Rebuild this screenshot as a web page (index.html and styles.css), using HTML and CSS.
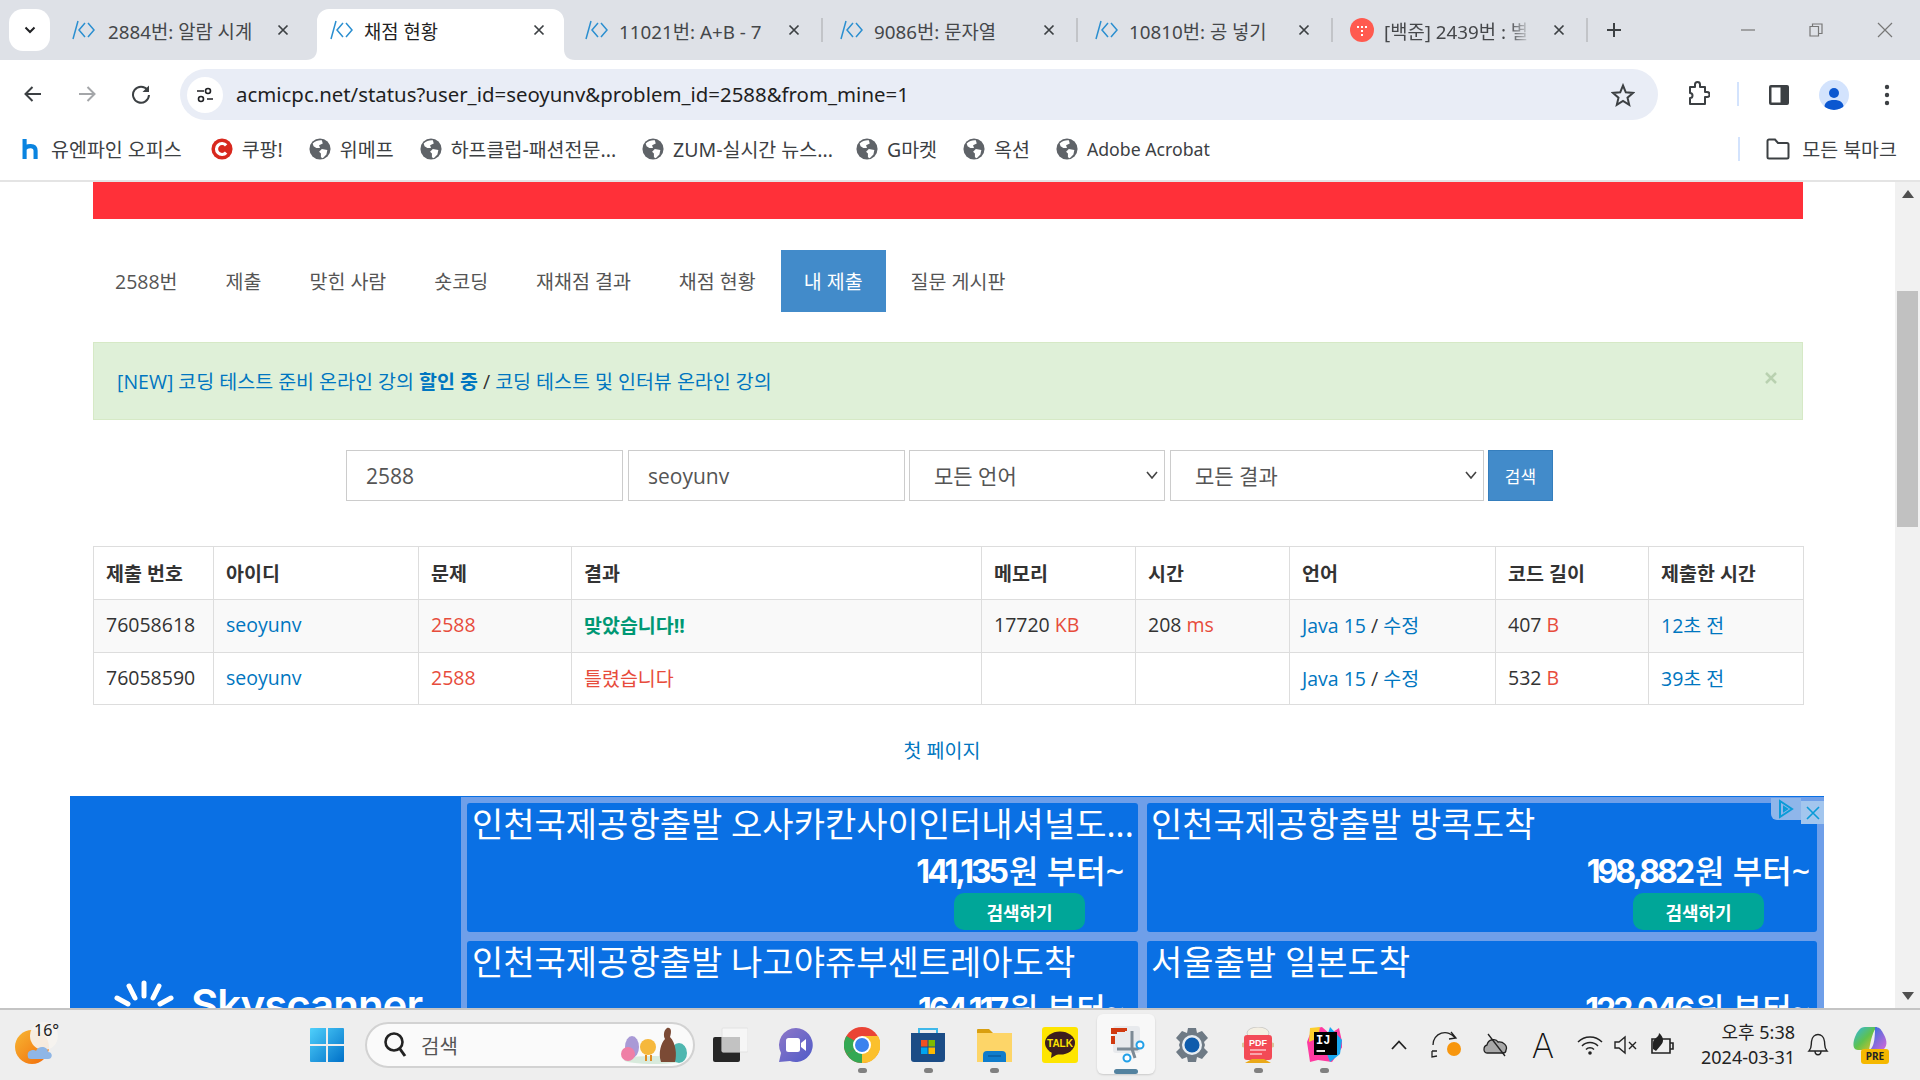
FILE: index.html
```html
<!DOCTYPE html>
<html lang="ko">
<head>
    <meta charset="UTF-8">
    <title>채점 현황</title>
    <link rel="stylesheet" href="styles.css">
</head>
<body>
    <svg class="defs" width="0" height="0">
        <symbol id="boj" viewBox="0 0 24 24">
            <path d="M6 3 L1 21 M13 5 L7 12 L13 19 M16 5 L22 12 L16 19" fill="none" stroke="#2b8fd0" stroke-width="1.5"/>
        </symbol>
        <symbol id="tabx" viewBox="0 0 12 12">
            <path d="M1.5 1.5 L10.5 10.5 M10.5 1.5 L1.5 10.5" fill="none" stroke="#3c4043" stroke-width="1.7"/>
        </symbol>
        <symbol id="globe" viewBox="0 0 24 24">
            <circle cx="12" cy="12" r="11.5" fill="#5f6368"/>
            <path d="M4 6 C7 3 11 2 14 2.500 L15 6 L11 8 L12 11 L8 11 L5 9 Z M14 12 L20 13 L19 18 L15 22 L13 21 L13 17 L11 15 Z" fill="#fff"/>
        </symbol>
    </svg>

    <div class="tabstrip">
        <div class="tab-menu">
            <svg width="12" height="8" viewBox="0 0 12 8"><path d="M1.500 1.500 L6 6 L10.500 1.500" fill="none" stroke="#202124" stroke-width="2"/></svg>
        </div>
        <div class="tab first">
            <svg class="favicon"><use href="#boj"/></svg>
            <span class="tab-title">2884번: 알람 시계</span>
            <svg class="tab-close"><use href="#tabx"/></svg>
        </div>
        <div class="tab active">
            <svg class="tab-shape" width="269" height="51" viewBox="0 0 269 51"><path d="M0 51 C7 51 11 47 11 40 V12 A12 12 0 0 1 23 0 H246 A12 12 0 0 1 258 12 V40 C258 47 262 51 269 51 Z" fill="#fff"/></svg>
            <svg class="favicon"><use href="#boj"/></svg>
            <span class="tab-title">채점 현황</span>
            <svg class="tab-close"><use href="#tabx"/></svg>
        </div>
        <div class="tab sep">
            <svg class="favicon"><use href="#boj"/></svg>
            <span class="tab-title">11021번: A+B - 7</span>
            <svg class="tab-close"><use href="#tabx"/></svg>
        </div>
        <div class="tab sep">
            <svg class="favicon"><use href="#boj"/></svg>
            <span class="tab-title">9086번: 문자열</span>
            <svg class="tab-close"><use href="#tabx"/></svg>
        </div>
        <div class="tab sep">
            <svg class="favicon"><use href="#boj"/></svg>
            <span class="tab-title">10810번: 공 넣기</span>
            <svg class="tab-close"><use href="#tabx"/></svg>
        </div>
        <div class="tab sep">
            <svg class="favicon" viewBox="0 0 24 24"><circle cx="12" cy="12" r="12" fill="#ff5a4f"/><path d="M7 8h2v2H7z M11 8h2v2h-2z M15 8h2v2h-2z M11 12h2v2h-2z M11 16h2v2h-2z" fill="#fff"/></svg>
            <span class="tab-title fade">[백준] 2439번 : 별</span>
            <svg class="tab-close"><use href="#tabx"/></svg>
        </div>
        <svg class="tab-new" width="16" height="16" viewBox="0 0 16 16"><path d="M8 1 V15 M1 8 H15" stroke="#3c4043" stroke-width="2"/></svg>
        <div class="win-controls">
            <svg width="14" height="14" viewBox="0 0 14 14"><path d="M0 7 H14" stroke="#777" stroke-width="1.200"/></svg>
            <svg width="14" height="14" viewBox="0 0 14 14"><path d="M1 3.500 H9.500 V13 H1 Z M3.500 3.500 V1 H13 V10.500 H9.500" fill="none" stroke="#777" stroke-width="1.200"/></svg>
            <svg width="16" height="16" viewBox="0 0 16 16"><path d="M1 1 L15 15 M15 1 L1 15" stroke="#777" stroke-width="1.200"/></svg>
        </div>
    </div>

    <div class="toolbar">
        <svg class="tool back" width="20" height="20" viewBox="0 0 20 20"><path d="M18 10 H3 M9.500 3 L2.500 10 L9.500 17" fill="none" stroke="#3c4043" stroke-width="2"/></svg>
        <svg class="tool forward" width="20" height="20" viewBox="0 0 20 20"><path d="M2 10 H17 M10.500 3 L17.500 10 L10.500 17" fill="none" stroke="#a4a6a9" stroke-width="2"/></svg>
        <svg class="tool reload" width="20" height="20" viewBox="0 0 20 20"><path d="M16.500 6 A8 8 0 1 0 18 11" fill="none" stroke="#3c4043" stroke-width="2"/><path d="M18 1.500 V8 H11.500 Z" fill="#3c4043"/></svg>
        <div class="omnibox">
            <div class="site-btn">
                <svg width="18" height="18" viewBox="0 0 18 18"><g fill="none" stroke="#202124" stroke-width="1.600"><path d="M1 5 H8 M11 13 H17"/><circle cx="12" cy="5" r="2.500"/><circle cx="5" cy="13" r="2.500"/></g></svg>
            </div>
            <span class="url">acmicpc.net/status?user_id=seoyunv&amp;problem_id=2588&amp;from_mine=1</span>
            <svg class="star" width="24" height="24" viewBox="0 0 24 24"><path d="M12 2.500 L14.800 9.300 L22 9.900 L16.500 14.700 L18.200 21.800 L12 18 L5.800 21.800 L7.500 14.700 L2 9.900 L9.200 9.300 Z" fill="none" stroke="#3c4043" stroke-width="2"/></svg>
        </div>
        <svg class="tool ext" width="24" height="26" viewBox="0 0 24 26"><path d="M4 6 H9 V3.500 A2.500 2.500 0 0 1 14 3.500 V6 H19 V11 H21 A2.500 2.500 0 0 1 21 16 H19 V23 H4 V17 A2.500 2.500 0 0 0 4 12 Z" fill="none" stroke="#3c4043" stroke-width="2" stroke-linejoin="round"/></svg>
        <span class="tool-sep"></span>
        <svg class="tool panel" width="22" height="22" viewBox="0 0 22 22"><rect x="1" y="1" width="20" height="20" rx="2" fill="#3c4043"/><rect x="3.500" y="3.500" width="9" height="15" fill="#fff"/></svg>
        <div class="avatar">
            <svg width="20" height="24" viewBox="0 0 20 24"><circle cx="10" cy="7" r="5" fill="#0b57d0"/><path d="M0 24 C0 16 4 14 10 14 C16 14 20 16 20 24 Z" fill="#0b57d0"/></svg>
        </div>
        <svg class="tool menu" width="6" height="24" viewBox="0 0 6 24"><circle cx="3" cy="4" r="2.200" fill="#3c4043"/><circle cx="3" cy="12" r="2.200" fill="#3c4043"/><circle cx="3" cy="20" r="2.200" fill="#3c4043"/></svg>
    </div>

    <div class="bookmarks">
        <div class="bm office"><svg class="bm-icon" viewBox="0 0 20 24"><path d="M3 1 V23 M3 12 C5 8 15 7 15 14 V23" fill="none" stroke="#0a84e0" stroke-width="4.500"/></svg><span>유엔파인 오피스</span></div>
        <div class="bm"><svg class="bm-icon" viewBox="0 0 24 24"><circle cx="12" cy="12" r="11.500" fill="#d8281e"/><path d="M16.500 8 A6 6 0 1 0 16.500 16" fill="none" stroke="#fff" stroke-width="3.500"/></svg><span>쿠팡!</span></div>
        <div class="bm"><svg class="bm-icon"><use href="#globe"/></svg><span>위메프</span></div>
        <div class="bm"><svg class="bm-icon"><use href="#globe"/></svg><span>하프클럽-패션전문...</span></div>
        <div class="bm zum"><svg class="bm-icon"><use href="#globe"/></svg><span>ZUM-실시간 뉴스...</span></div>
        <div class="bm"><svg class="bm-icon"><use href="#globe"/></svg><span>G마켓</span></div>
        <div class="bm"><svg class="bm-icon"><use href="#globe"/></svg><span>옥션</span></div>
        <div class="bm"><svg class="bm-icon"><use href="#globe"/></svg><span class="latin">Adobe Acrobat</span></div>
        <span class="bm-sep"></span>
        <div class="bm all"><svg width="24" height="22" viewBox="0 0 24 22"><path d="M1.500 3 A1.500 1.500 0 0 1 3 1.500 H9 L12 5 H21 A1.500 1.500 0 0 1 22.500 6.500 V19 A1.500 1.500 0 0 1 21 20.500 H3 A1.500 1.500 0 0 1 1.500 19 Z" fill="none" stroke="#3c4043" stroke-width="2"/></svg><span>모든 북마크</span></div>
    </div>

    <div class="viewport">
        <div class="page">
            <div class="container">
                <div class="red-bar"></div>
                <ul class="nav">
                    <li>2588번</li>
                    <li>제출</li>
                    <li>맞힌 사람</li>
                    <li>숏코딩</li>
                    <li>재채점 결과</li>
                    <li>채점 현황</li>
                    <li class="on">내 제출</li>
                    <li>질문 게시판</li>
                </ul>
                <div class="alert">
                    <p><a>[NEW] 코딩 테스트 준비 온라인 강의 <b>할인 중</b></a> / <a>코딩 테스트 및 인터뷰 온라인 강의</a></p>
                    <svg class="alert-close" width="12" height="12" viewBox="0 0 12 12"><path d="M1 1 L11 11 M11 1 L1 11" stroke="#b9d1b0" stroke-width="2.500"/></svg>
                </div>
                <form class="search">
                    <input class="field w-id" type="text" value="2588">
                    <input class="field w-id gap-s" type="text" value="seoyunv">
                    <div class="select w-lang">
                        <span>모든 언어</span>
                        <svg width="12" height="8" viewBox="0 0 12 8"><path d="M1 1 L6 7 L11 1" fill="none" stroke="#444" stroke-width="1.600"/></svg>
                    </div>
                    <div class="select w-res">
                        <span>모든 결과</span>
                        <svg width="12" height="8" viewBox="0 0 12 8"><path d="M1 1 L6 7 L11 1" fill="none" stroke="#444" stroke-width="1.600"/></svg>
                    </div>
                    <button class="search-btn" type="button">검색</button>
                </form>
                <table class="status">
                    <colgroup>
                        <col class="c1"><col class="c2"><col class="c3"><col class="c4"><col class="c5">
                        <col class="c6"><col class="c7"><col class="c8"><col class="c9">
                    </colgroup>
                    <thead>
                        <tr><th>제출 번호</th><th>아이디</th><th>문제</th><th>결과</th><th>메모리</th><th>시간</th><th>언어</th><th>코드 길이</th><th>제출한 시간</th></tr>
                    </thead>
                    <tbody>
                        <tr class="odd">
                            <td>76058618</td><td><a>seoyunv</a></td><td><a class="red">2588</a></td>
                            <td><b class="ac">맞았습니다!!</b></td>
                            <td>17720 <span class="red">KB</span></td><td>208 <span class="red">ms</span></td>
                            <td><a>Java 15</a> / <a>수정</a></td><td>407 <span class="red">B</span></td><td><a>12초 전</a></td>
                        </tr>
                        <tr>
                            <td>76058590</td><td><a>seoyunv</a></td><td><a class="red">2588</a></td>
                            <td><span class="red">틀렸습니다</span></td>
                            <td></td><td></td>
                            <td><a>Java 15</a> / <a>수정</a></td><td>532 <span class="red">B</span></td><td><a>39초 전</a></td>
                        </tr>
                    </tbody>
                </table>
                <div class="pager"><a>첫 페이지</a></div>
            </div>

            <div class="ad">
                <div class="ad-brand">
                    <svg width="64" height="44" viewBox="0 0 64 44"><g fill="none" stroke="#fff" stroke-width="5" stroke-linecap="round"><path d="M32 3 V16 M17 6 L23 18 M47 6 L41 18 M5 18 L16 24 M59 18 L48 24"/></g></svg>
                    <span>Skyscanner</span>
                </div>
                <div class="ad-grid">
                    <div class="ad-card">
                        <div class="ad-title">인천국제공항출발 오사카칸사이인터내셔널도...</div>
                        <div class="ad-price"><b>141,135</b>원 부터~</div>
                        <div class="ad-foot"><span class="ad-btn">검색하기</span></div>
                    </div>
                    <div class="ad-card right">
                        <div class="ad-title">인천국제공항출발 방콕도착</div>
                        <div class="ad-price"><b>198,882</b>원 부터~</div>
                        <div class="ad-foot"><span class="ad-btn">검색하기</span></div>
                    </div>
                    <div class="ad-card">
                        <div class="ad-title">인천국제공항출발 나고야쥬부센트레아도착</div>
                        <div class="ad-price"><b>164,117</b>원 부터~</div>
                    </div>
                    <div class="ad-card right">
                        <div class="ad-title">서울출발 일본도착</div>
                        <div class="ad-price"><b>122,046</b>원 부터~</div>
                    </div>
                </div>
                <div class="ad-choice">
                    <svg width="18" height="20" viewBox="0 0 18 20"><path d="M3 2 L15 10 L3 18 Z M7 8 L10 10 L7 12 Z" fill="none" stroke="#0a9bd8" stroke-width="2"/></svg>
                </div>
                <div class="ad-x">
                    <svg width="14" height="14" viewBox="0 0 14 14"><path d="M1 1 L13 13 M13 1 L1 13" stroke="#0a9bd8" stroke-width="1.600"/></svg>
                </div>
            </div>
        </div>
        <div class="scrollbar">
            <svg class="sb-up" width="12" height="8" viewBox="0 0 12 8"><path d="M0 8 L6 0 L12 8 Z" fill="#505050"/></svg>
            <div class="sb-thumb"></div>
            <svg class="sb-down" width="12" height="8" viewBox="0 0 12 8"><path d="M0 0 L6 8 L12 0 Z" fill="#505050"/></svg>
        </div>
    </div>

    <div class="taskbar">
        <div class="weather">
            <svg width="52" height="48" viewBox="0 0 52 48">
                <defs><linearGradient id="sun" x1="0" y1="0" x2="1" y2="1"><stop offset="0" stop-color="#f7b733"/><stop offset="1" stop-color="#f26a0a"/></linearGradient></defs>
                <circle cx="18" cy="26" r="17" fill="url(#sun)"/>
                <circle cx="30" cy="15" r="14" fill="#f6f3ef" opacity=".92"/>
                <path d="M14 36 C12 29 20 28 22 30 C24 24 34 25 34 31 C39 31 39 38 34 38 H17 C15 38 14 37 14 36 Z" fill="#8fb6e6"/>
            </svg>
            <span>16°</span>
        </div>
        <svg class="winlogo" width="36" height="36" viewBox="0 0 36 36">
            <defs><linearGradient id="wl" x1="0" y1="0" x2="1" y2="1"><stop offset="0" stop-color="#4fd0fb"/><stop offset="1" stop-color="#0070c8"/></linearGradient></defs>
            <path d="M1 2 A1 1 0 0 1 2 1 H17 V17 H1 Z M19 1 H34 A1 1 0 0 1 35 2 V17 H19 Z M1 19 H17 V35 H2 A1 1 0 0 1 1 34 Z M19 19 H35 V34 A1 1 0 0 1 34 35 H19 Z" fill="url(#wl)"/>
        </svg>
        <div class="task-search">
            <svg width="26" height="28" viewBox="0 0 26 28"><circle cx="11" cy="11" r="8.500" fill="none" stroke="#222" stroke-width="2.600"/><path d="M17 18 L22 25" stroke="#222" stroke-width="3"/></svg>
            <span>검색</span>
            <svg class="easter" width="68" height="40" viewBox="0 0 68 40">
                <ellipse cx="33" cy="35" rx="30" ry="4" fill="#d8eadc"/>
                <ellipse cx="11" cy="22" rx="7" ry="11" fill="#a99ad6"/>
                <ellipse cx="7" cy="29" rx="7" ry="7" fill="#ef7fa6"/>
                <ellipse cx="58" cy="28" rx="8" ry="10" fill="#4fb7b0"/>
                <circle cx="27" cy="22" r="8" fill="#f6b83c"/><path d="M25 30 V36 M30 30 V36" stroke="#e08b20" stroke-width="2"/>
                <path d="M46 3 C50 2 51 6 49 12 C55 18 56 30 54 37 H40 C37 28 40 18 44 14 C42 10 43 5 46 3 Z" fill="#7b4a35"/>
            </svg>
        </div>
        <div class="apps">
            <div class="app">
                <svg width="36" height="36" viewBox="0 0 36 36"><rect x="1" y="10" width="27" height="25" rx="2" fill="#262626"/><rect x="10" y="1" width="26" height="24" rx="1" fill="#f6f6f6" stroke="#e2e2e2"/><rect x="10" y="10" width="18" height="15" fill="#c2c2c2"/></svg>
            </div>
            <div class="app">
                <svg width="36" height="36" viewBox="0 0 36 36"><defs><linearGradient id="meet" x1="0" y1="0" x2="1" y2="1"><stop offset="0" stop-color="#8f78c8"/><stop offset="1" stop-color="#4f5bc8"/></linearGradient></defs><path d="M18 1 A17 17 0 1 1 12 34 L1 35 L3 26 A17 17 0 0 1 18 1 Z" fill="url(#meet)"/><rect x="8" y="11" width="14" height="14" rx="2.500" fill="#fff"/><path d="M23 16 L28 12 V24 L23 20 Z" fill="#fff"/></svg>
            </div>
            <div class="app dot">
                <svg width="36" height="36" viewBox="0 0 36 36"><circle cx="18" cy="18" r="18" fill="#ea4335"/><path d="M18 18 L2.400 27 A18 18 0 0 0 18 36 L27 20 Z" fill="#34a853"/><path d="M18 18 V36 A18 18 0 0 0 34 9 H18 Z" fill="#fbc02d"/><path d="M18 18 L2.400 27 A18 18 0 0 1 2.400 9 Z" fill="#34a853"/><circle cx="18" cy="18" r="9" fill="#fff"/><circle cx="18" cy="18" r="7" fill="#3b82ee"/></svg>
            </div>
            <div class="app dot">
                <svg width="36" height="36" viewBox="0 0 36 36"><path d="M9 7 V2 H27 V7" fill="none" stroke="#3fb8ea" stroke-width="2"/><path d="M1 6 H35 V32 A3 3 0 0 1 32 35 H4 A3 3 0 0 1 1 32 Z" fill="#1b4c86"/><rect x="11" y="13" width="6.500" height="6.500" fill="#f25022"/><rect x="18.500" y="13" width="6.500" height="6.500" fill="#7fba00"/><rect x="11" y="20.500" width="6.500" height="6.500" fill="#00a4ef"/><rect x="18.500" y="20.500" width="6.500" height="6.500" fill="#ffb900"/></svg>
            </div>
            <div class="app dot">
                <svg width="36" height="36" viewBox="0 0 36 36"><path d="M1 3 A1 1 0 0 1 2 2 H13 L17 6 H35 V10 H1 Z" fill="#d99f10"/><rect x="1" y="6" width="35" height="29" fill="#fdd568"/><path d="M7 35 V28 A4 4 0 0 1 11 24 H26 A4 4 0 0 1 30 28 V35 Z" fill="#0f7ccc"/><path d="M12 29 H25" stroke="#0a5ca0" stroke-width="1.500"/></svg>
            </div>
            <div class="app">
                <svg width="36" height="36" viewBox="0 0 36 36"><rect width="36" height="36" rx="3" fill="#fee500"/><ellipse cx="18" cy="16" rx="15" ry="11.500" fill="#3c1e1e"/><path d="M10 24 L9 31 L16 27 Z" fill="#3c1e1e"/><text x="18" y="20" class="talk">TALK</text></svg>
            </div>
            <div class="app current">
                <svg width="38" height="38" viewBox="0 0 38 38"><rect x="6" y="1" width="27" height="27" rx="3" fill="#e8eaed"/><path d="M6 3 H18 V7 H6 Z M4 3 H10 V9 H4 Z M4 11 H8 V19 H4 Z M10 3 H14 V6 H10 Z M16 3 H20 V6 H16 Z" fill="#d13a10"/><path d="M25 6 V24 L28 33 M10 24 H30 L36 20" fill="none" stroke="#7d8a95" stroke-width="3"/><circle cx="33" cy="20" r="3.500" fill="#fff" stroke="#22a0e8" stroke-width="2"/><circle cx="20" cy="33" r="3.500" fill="#fff" stroke="#22a0e8" stroke-width="2"/></svg>
                <i></i>
            </div>
            <div class="app">
                <svg width="36" height="36" viewBox="0 0 36 36"><path d="M14 1 H22 L23 6 L28 4 L34 11 L30 15 L31 18 L30 21 L34 25 L28 32 L23 30 L22 35 H14 L13 30 L8 32 L2 25 L6 21 L5 18 L6 15 L2 11 L8 4 L13 6 Z" fill="#6e7a85"/><circle cx="18" cy="18" r="10" fill="#e7edf2"/><circle cx="18" cy="18" r="7.500" fill="#0f5cac"/></svg>
            </div>
            <div class="app dot">
                <svg width="32" height="36" viewBox="0 0 32 36"><ellipse cx="16" cy="6" rx="11" ry="6" fill="#f4efe2" stroke="#aaa" stroke-width=".5"/><circle cx="2" cy="18" r="2.500" fill="#d8c49a"/><circle cx="30" cy="18" r="2.500" fill="#d8c49a"/><rect x="2" y="8" width="28" height="25" rx="3" fill="#f34a56"/><text x="16" y="19" class="pdf">PDF</text><path d="M8 23 H24 M8 27 H20" stroke="#fff" stroke-width="1"/><path d="M3 36 L10 32 H22 L29 36 Z" fill="#eaa91a"/></svg>
            </div>
            <div class="app dot">
                <svg width="36" height="38" viewBox="0 0 36 38"><path d="M6 3 L16 1 L24 8 L33 2 L37 20 L26 36 L12 34 L4 36 L1 16 Z" fill="#ff3aa0"/><path d="M24 1 L36 14 L34 28 L24 36 L18 20 Z" fill="#18a8f0"/><path d="M4 2 L14 1 L12 12 L3 16 Z" fill="#fccf2c"/><rect x="8" y="6" width="23" height="23" fill="#000"/><text x="10" y="18" class="ij">IJ</text><path d="M10.500 25 H19" stroke="#fff" stroke-width="1.800"/></svg>
            </div>
        </div>
        <div class="tray">
            <svg class="t-chev" width="16" height="10" viewBox="0 0 16 10"><path d="M1 9 L8 1.500 L15 9" fill="none" stroke="#222" stroke-width="1.800"/></svg>
            <svg class="t-sync" width="32" height="28" viewBox="0 0 32 28"><path d="M2 14 A12 12 0 0 1 24 7 M20 1 L25 7 L18 8 M1 20 L6 20 M6 25 L1 26 L1 20" fill="none" stroke="#222" stroke-width="1.300"/><circle cx="23" cy="18" r="7" fill="#f7960e"/></svg>
            <svg class="t-cloud" width="26" height="24" viewBox="0 0 26 24"><path d="M4 20 C0 20 0 13 4 12 C5 6 13 5 15 9 C20 8 25 13 23 17 C23 20 21 20 20 20 Z" fill="#a8a8a8" stroke="#222" stroke-width="1.300"/><path d="M5 1 L22 23" stroke="#222" stroke-width="1.300"/></svg>
            <span class="t-ime">A</span>
            <svg class="t-wifi" width="26" height="20" viewBox="0 0 26 20"><g fill="none" stroke="#222" stroke-width="1.500"><path d="M1 7 A17 17 0 0 1 25 7 M5 11 A11 11 0 0 1 21 11 M9 14.500 A5.500 5.500 0 0 1 17 14.500"/></g><circle cx="13" cy="18" r="1.800" fill="#222"/></svg>
            <svg class="t-vol" width="24" height="20" viewBox="0 0 24 20"><path d="M1 7 H5 L11 2 V18 L5 13 H1 Z M15 7 L22 14 M22 7 L15 14" fill="none" stroke="#222" stroke-width="1.400"/></svg>
            <svg class="t-pen" width="26" height="24" viewBox="0 0 26 24"><path d="M2 6 H20 V20 H2 Z M20 10 H23 V16 H20" fill="none" stroke="#222" stroke-width="1.600"/><path d="M3 10 C3 5 9 5 9 0 C14 4 14 9 11 12 L6 18 L3 16 Z" fill="#222"/></svg>
        </div>
        <div class="clock">
            <div>오후 5:38</div>
            <div>2024-03-31</div>
        </div>
        <svg class="bell" width="22" height="24" viewBox="0 0 22 24"><path d="M2 18 C5 15 4 12 4.500 8.500 C5 4 8 1.500 11 1.500 C14 1.500 17 4 17.500 8.500 C18 12 17 15 20 18 Z M8 18 C8 23 14 23 14 18" fill="none" stroke="#222" stroke-width="1.400"/></svg>
        <div class="copilot">
            <svg width="36" height="30" viewBox="0 0 36 30">
                <defs><linearGradient id="cp" x1="0" y1="0" x2="1" y2="1"><stop offset="0" stop-color="#2fb5e8"/><stop offset=".5" stop-color="#5fc24e"/><stop offset="1" stop-color="#f0c020"/></linearGradient><linearGradient id="cq" x1="0" y1="0" x2="1" y2="1"><stop offset="0" stop-color="#1f6fe0"/><stop offset="1" stop-color="#d868d8"/></linearGradient></defs>
                <path d="M12 1 H24 C20 4 18 14 16 24 H5 C-1 24 0 16 2 11 C4 6 7 1 12 1 Z" fill="url(#cp)"/>
                <path d="M22 1 C26 1 28 3 30 7 C33 12 36 19 30 24 H16 C22 22 22 8 22 1 Z" fill="url(#cq)"/>
            </svg>
            <span>PRE</span>
        </div>
    </div>
</body>
</html>
```

FILE: styles.css
```css
* {
    box-sizing: border-box;
}
html, body {
    margin: 0;
    height: 100%;
}
body {
    width: 1920px;
    height: 1080px;
    overflow: hidden;
    display: flex;
    flex-direction: column;
    font-family: "Noto Sans", "Noto Sans CJK KR", sans-serif;
    background-color: #fff;
}
.defs {
    position: absolute;
}

/* tabs */
.tabstrip {
    height: 60px;
    flex: none;
    display: flex;
    align-items: flex-start;
    padding-top: 9px;
    padding-left: 9px;
    background-color: #dee1e7;
}
.tab-menu {
    width: 41px;
    height: 42px;
    margin-right: 5px;
    border-radius: 14px;
    background-color: #fff;
    display: flex;
    align-items: center;
    justify-content: center;
}
.tab {
    position: relative;
    width: 255px;
    height: 42px;
    padding-left: 17px;
    display: flex;
    align-items: center;
    flex: none;
}
.tab.first {
    width: 258px;
}
.tab.sep::after {
    content: "";
    position: absolute;
    right: 0;
    top: 9px;
    height: 24px;
    width: 2px;
    background-color: #c2c4c8;
}
.tab-shape {
    position: absolute;
    left: -7px;
    top: 0;
}
.favicon {
    position: relative;
    width: 24px;
    height: 24px;
    flex: none;
}
.tab-title {
    position: relative;
    width: 164px;
    margin-left: 10px;
    padding-top: 2px;
    font-size: 18.800px;
    color: #45474a;
    white-space: nowrap;
    overflow: hidden;
}
.tab.first .tab-title {
    margin-left: 12px;
}
.tab.active .tab-title {
    color: #1f1f1f;
}
.tab-title.fade {
    width: 147px;
    margin-right: 17px;
    -webkit-mask-image: linear-gradient(to right, #000 85%, transparent);
    mask-image: linear-gradient(to right, #000 85%, transparent);
}
.tab-close {
    position: relative;
    width: 12px;
    height: 12px;
    margin-left: 5px;
    flex: none;
}
.tab-new {
    margin-left: 18px;
    margin-top: 13px;
}
.win-controls {
    margin-left: auto;
    height: 42px;
    display: flex;
    align-items: center;
    gap: 54px;
    padding-right: 27px;
}

/* toolbar */
.toolbar {
    height: 60px;
    flex: none;
    position: relative;
    display: flex;
    align-items: flex-start;
    padding-top: 9px;
    background-color: #fff;
    margin-top: 0;
    border-radius: 12px 12px 0 0;
}
.tool {
    flex: none;
    margin-top: 15px;
}
.back {
    margin-left: 23px;
}
.forward {
    margin-left: 34px;
}
.reload {
    margin-left: 34px;
}
.omnibox {
    width: 1478px;
    height: 51px;
    margin-left: 29px;
    padding-left: 7px;
    padding-right: 23px;
    border-radius: 26px;
    background-color: #e9edf6;
    display: flex;
    align-items: center;
    flex: none;
}
.site-btn {
    width: 36px;
    height: 36px;
    border-radius: 50%;
    background-color: #fff;
    display: flex;
    align-items: center;
    justify-content: center;
    flex: none;
}
.url {
    margin-left: 13px;
    padding-bottom: 1px;
    font-size: 20.400px;
    color: #1f1f1f;
    white-space: nowrap;
}
.star {
    margin-left: auto;
}
.ext {
    margin-top: 12px;
    margin-left: 28px;
}
.tool-sep {
    width: 2px;
    height: 24px;
    margin-top: 13px;
    margin-left: 27px;
    background-color: #d3e3fd;
}
.panel {
    margin-top: 15px;
    margin-left: 29px;
}
.avatar {
    width: 30px;
    height: 30px;
    margin-left: 29px;
    margin-top: 11px;
    border-radius: 50%;
    background-color: #d3e3fd;
    display: flex;
    align-items: flex-end;
    justify-content: center;
    overflow: hidden;
    flex: none;
}
.menu {
    margin-top: 14px;
    margin-left: 35px;
}

/* bookmarks */
.bookmarks {
    height: 62px;
    flex: none;
    display: flex;
    align-items: center;
    gap: 26px;
    padding-left: 20px;
    padding-bottom: 3px;
    background-color: #fff;
    border-bottom: 2px solid #e4e4e4;
}
.bm {
    display: flex;
    align-items: center;
    gap: 9px;
    font-size: 19.500px;
    color: #3c4043;
    white-space: nowrap;
}
.bm.office {
    margin-right: 3px;
}
.bm.zum {
    margin-right: -3px;
}
.bm-icon {
    width: 22px;
    height: 22px;
    flex: none;
}
.bm .latin {
    font-size: 17.700px;
}
.bm-sep {
    width: 2px;
    height: 24px;
    margin-left: auto;
    background-color: #d3e3fd;
}
.bm.all {
    gap: 12px;
    padding-right: 23px;
}

/* page */
.viewport {
    height: 826px;
    flex: none;
    display: flex;
    overflow: hidden;
}
.page {
    width: 1895px;
    flex: none;
    overflow: hidden;
    font-family: "Open Sans", "Noto Sans CJK KR", sans-serif;
    font-size: 19.500px;
    color: #333;
}
.container {
    width: 1710px;
    margin-left: 93px;
}
.red-bar {
    height: 37px;
    background-color: #ff3039;
}
.nav {
    display: flex;
    margin: 31px 0 0 -1px;
    padding: 0;
    list-style: none;
    color: #555;
}
.nav li {
    height: 62px;
    padding: 0 23px 2px;
    margin-right: 2px;
    display: flex;
    align-items: center;
}
.nav li.on {
    background-color: #428bca;
    color: #fff;
}
a {
    color: #0076c0;
    text-decoration: none;
}
.red {
    color: #e74c3c;
}
a.red {
    color: #e74c3c;
}
.ac {
    color: #009874;
}
.alert {
    height: 78px;
    margin-top: 30px;
    padding: 0 23px 2px;
    display: flex;
    align-items: center;
    justify-content: space-between;
    background-color: #dff0d8;
    border: 1px solid #d6e9c6;
}
.alert p {
    margin: 0;
}
.alert-close {
    margin-right: 2px;
    margin-bottom: 4px;
}
.search {
    display: flex;
    margin-top: 30px;
    padding-left: 253px;
}
.field, .select {
    height: 51px;
    border: 1px solid #ccc;
    background-color: #fff;
    font-family: inherit;
    font-size: 21px;
    color: #555;
}
.field {
    padding: 0 19px;
    outline: none;
}
.w-id {
    width: 277px;
}
.gap-s {
    margin-left: 5px;
}
.select {
    display: flex;
    align-items: center;
    justify-content: space-between;
    padding: 0 6px 2px 24px;
}
.w-lang {
    width: 256px;
    margin-left: 4px;
}
.w-res {
    width: 314px;
    margin-left: 5px;
}
.search-btn {
    width: 65px;
    height: 51px;
    margin-left: 4px;
    padding: 0;
    border: 1px solid #357ebd;
    background-color: #428bca;
    color: #fff;
    font-family: inherit;
    font-size: 17px;
}
.status {
    width: 1710px;
    margin-top: 45px;
    table-layout: fixed;
    border-collapse: collapse;
}
.c1 { width: 120px; }
.c2 { width: 205px; }
.c3 { width: 153px; }
.c4 { width: 410px; }
.c5 { width: 154px; }
.c6 { width: 154px; }
.c7 { width: 206px; }
.c8 { width: 153px; }
.c9 { width: 155px; }
.status th, .status td {
    height: 53px;
    padding: 0 12px 2px;
    border: 1px solid #ddd;
    text-align: left;
    white-space: nowrap;
}
.status th {
    font-weight: 700;
}
.status td {
    height: 52.500px;
}
.odd {
    background-color: #f9f9f9;
}
.pager {
    margin-top: 30px;
    height: 61px;
    padding-right: 12px;
    text-align: center;
}

/* ad */
.ad {
    position: relative;
    width: 1754px;
    height: 300px;
    margin-left: 70px;
    display: flex;
    background-color: #0a70e4;
    font-family: "Noto Sans", "Noto Sans CJK KR", sans-serif;
    color: #fff;
}
.ad-brand {
    width: 391px;
    flex: none;
    display: flex;
    align-items: flex-start;
    gap: 15px;
    padding: 186px 0 0 42px;
}
.ad-brand span {
    margin-top: -2px;
    font-family: "Inter", sans-serif;
    font-size: 42px;
    font-weight: 600;
    line-height: 50px;
    letter-spacing: -1px;
}
.ad-brand svg {
    margin-top: -2px;
    flex: none;
}
.ad-grid {
    width: 1363px;
    flex: none;
    margin-top: 1px;
    padding: 6px 7px 0 6px;
    display: grid;
    grid-template-columns: 671px 670px;
    grid-auto-rows: 129px;
    gap: 9px;
    background-color: #6f9fe9;
}
.ad-card {
    padding: 1px 14px 0 5px;
    border-radius: 3px;
    background-color: #0a70e4;
    overflow: hidden;
}
.ad-card.right {
    padding-right: 7px;
    padding-left: 4px;
}
.ad-title {
    font-size: 34px;
    line-height: 40px;
    white-space: nowrap;
}
.ad-price {
    margin-top: 7px;
    font-size: 32px;
    line-height: 40px;
    text-align: right;
    font-weight: 500;
}
.ad-price b {
    font-family: "Inter", sans-serif;
    font-weight: 700;
    letter-spacing: -3px;
    margin-right: 3px;
}
.ad-foot {
    margin-top: 1px;
    padding-right: 20px;
    padding-left: 482px;
}
.ad-card.right .ad-foot {
    padding-left: 482px;
    padding-right: 0;
}
.ad-btn {
    width: 131px;
    height: 37px;
    display: flex;
    align-items: center;
    justify-content: center;
    border-radius: 10px;
    background-color: #00a698;
    font-size: 18px;
    font-weight: 700;
}
.ad-choice {
    position: absolute;
    left: 1701px;
    top: 2px;
    width: 30px;
    height: 22px;
    display: flex;
    align-items: center;
    justify-content: center;
    border-radius: 0 0 0 6px;
    background-color: #8fb6ea;
}
.ad-x {
    position: absolute;
    left: 1731px;
    top: 5px;
    width: 23px;
    height: 23px;
    display: flex;
    align-items: center;
    justify-content: center;
    background-color: #a3c6ee;
}

/* scrollbar */
.scrollbar {
    position: relative;
    width: 25px;
    flex: none;
    background-color: #f1f1f1;
    overflow: hidden;
}
.sb-up, .sb-down {
    position: absolute;
    left: 7px;
}
.sb-up {
    top: 8px;
}
.sb-down {
    bottom: 8px;
}
.sb-thumb {
    position: absolute;
    left: 2px;
    right: 2px;
    top: 109px;
    height: 236px;
    background-color: #c1c1c1;
}

/* taskbar */
.taskbar {
    height: 72px;
    flex: none;
    display: flex;
    align-items: center;
    border-top: 2px solid #c4c4c4;
    background-color: #eeeeee;
}
.weather {
    position: relative;
    width: 52px;
    height: 48px;
    margin-left: 14px;
    flex: none;
}
.weather span {
    position: absolute;
    left: 20px;
    top: -2px;
    font-size: 16px;
    color: #222;
}
.winlogo {
    margin-left: 243px;
    flex: none;
}
.task-search {
    width: 330px;
    height: 46px;
    margin-left: 20px;
    padding-left: 16px;
    border: 2px solid #d2d2d2;
    border-radius: 24px;
    background-color: #fafafa;
    display: flex;
    align-items: center;
    gap: 12px;
    font-size: 20px;
    color: #555;
    flex: none;
}
.easter {
    margin-left: auto;
    margin-right: 4px;
}
.apps {
    display: flex;
    margin-left: 2px;
    flex: none;
}
.app {
    position: relative;
    width: 66px;
    height: 70px;
    display: flex;
    align-items: center;
    justify-content: center;
    flex: none;
}
.app.dot::after {
    content: "";
    position: absolute;
    left: 29px;
    bottom: 7px;
    width: 9px;
    height: 5px;
    border-radius: 3px;
    background-color: #808080;
}
.app.current {
    background-color: #f8f8f8;
    width: 58px;
    height: 60px;
    margin: 4px 4px 0;
    border-radius: 6px;
    box-shadow: 0 1px 2px rgba(0, 0, 0, 0.15);
}
.app.current i {
    position: absolute;
    left: 17px;
    bottom: 0;
    width: 24px;
    height: 5px;
    border-radius: 3px;
    background-color: #53829f;
}
.talk {
    font-family: "Liberation Sans", sans-serif;
    font-size: 10px;
    font-weight: 700;
    fill: #fee500;
    text-anchor: middle;
}
.pdf {
    font-family: "Liberation Sans", sans-serif;
    font-size: 9px;
    font-weight: 700;
    fill: #fff;
    text-anchor: middle;
}
.ij {
    font-family: "Liberation Mono", monospace;
    font-size: 12px;
    font-weight: 700;
    fill: #fff;
}
.tray {
    display: flex;
    align-items: center;
    margin-left: 34px;
    flex: none;
}
.t-chev {
    margin-right: 24px;
}
.t-sync {
    margin-right: 20px;
}
.t-cloud {
    margin-right: 22px;
}
.t-ime {
    width: 24px;
    margin-right: 22px;
    font-family: "Inter", sans-serif;
    font-size: 34px;
    font-weight: 200;
    color: #111;
    text-align: center;
}
.t-wifi {
    margin-right: 11px;
}
.t-vol {
    margin-right: 12px;
}
.clock {
    width: 110px;
    margin-left: 9px;
    flex: none;
    font-size: 18px;
    line-height: 25px;
    color: #222;
    text-align: right;
}
.bell {
    margin-left: 12px;
    flex: none;
}
.copilot {
    position: relative;
    width: 36px;
    height: 38px;
    margin-left: 24px;
    flex: none;
}
.copilot span {
    position: absolute;
    left: 8px;
    bottom: 0;
    width: 28px;
    height: 15px;
    border-radius: 3px;
    background-color: #f5b800;
    font-size: 10px;
    font-weight: 700;
    line-height: 15px;
    text-align: center;
    color: #222;
}
```
